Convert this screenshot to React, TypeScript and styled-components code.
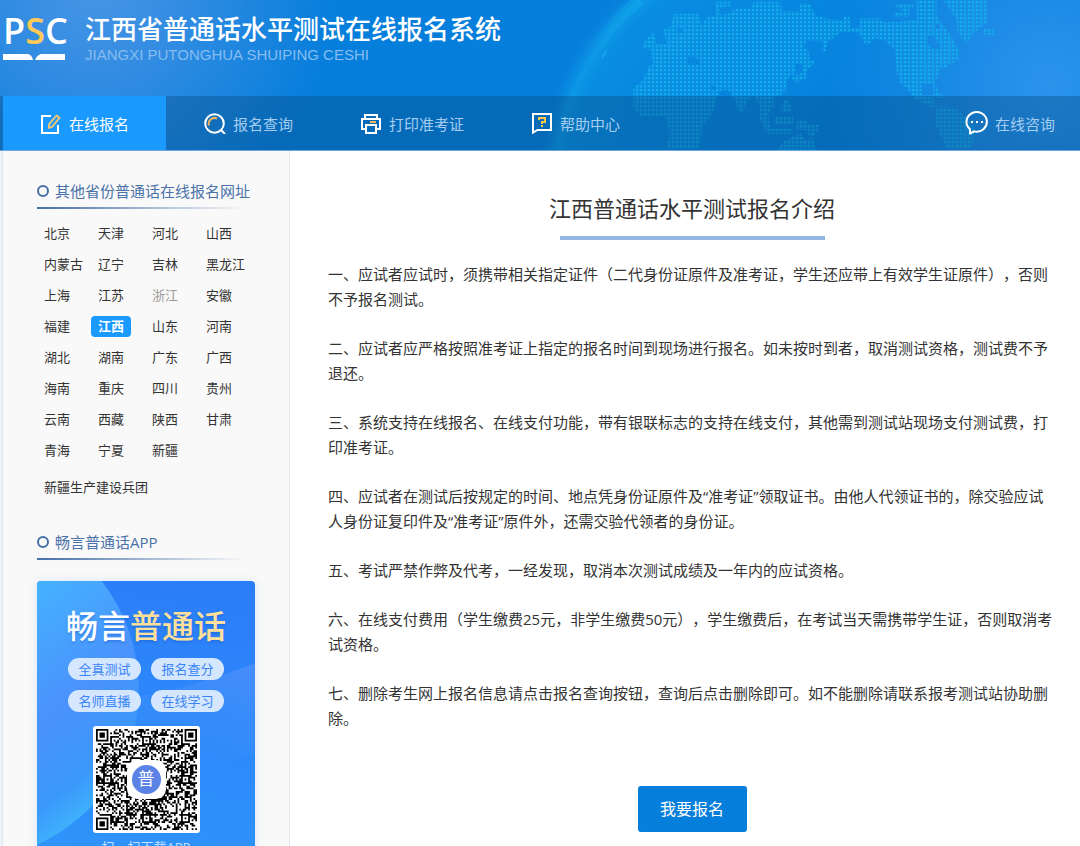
import React from "react";
import styled, { createGlobalStyle } from "styled-components";

const GlobalStyle = createGlobalStyle`
  *, *::before { box-sizing: border-box; }
  body {
    margin: 0;
    background: #eef2f9;
    color: #333;
    font-family: "Open Sans", "Noto Sans CJK SC", sans-serif;
    text-spacing-trim: space-all;
  }
  h1, h2, p, ul { margin: 0; padding: 0; font-weight: 400; }
  a { color: inherit; text-decoration: none; }
`;

const Page = styled.div`
  height: 100vh;
  display: flex;
  flex-direction: column;
  overflow: hidden;
`;

const Header = styled.header`
  position: relative;
  flex: none;
  border-bottom: 1px solid #6ba6da;
  background:
    radial-gradient(circle at 95px -10px, #4595e6 0, #3a8fe3 60px, rgba(6, 126, 219, 0) 240px),
    radial-gradient(circle at right 30px top 85px, #2b94ed 0, rgba(6, 126, 219, 0) 220px),
    #067edb;
`;

const Globe = styled.svg`
  position: absolute;
  top: 0;
  right: 0;
  width: 540px;
  height: 150px;
`;

const Brand = styled.div`
  position: relative;
  display: flex;
  gap: 20px;
  height: 96px;
  padding: 14px 3px;
`;

const Logo = styled.div`
  width: 62px;
  color: #fff;
  font-size: 36px;
  font-weight: 600;
  line-height: 34px;
  white-space: nowrap;
  svg { display: block; margin-top: 6px; }
`;

const LogoAccent = styled.span`
  color: #ffca57;
`;

const BrandTitle = styled.h1`
  color: #fff;
  font-size: 26px;
  font-weight: 500;
  line-height: 30px;
`;

const BrandSub = styled.p`
  color: #86bdf0;
  font-family: "Liberation Sans", sans-serif;
  font-size: 15px;
  line-height: 22px;
`;

const Nav = styled.nav`
  position: relative;
  display: flex;
  height: 54px;
  padding-left: 3px;
  background: rgba(6, 70, 120, 0.35);
`;

const NavLink = styled.a<{ $active?: boolean; $end?: boolean }>`
  display: flex;
  align-items: center;
  justify-content: center;
  gap: 7px;
  width: ${(p) => (p.$active ? "163px" : "auto")};
  margin-right: ${(p) => (p.$active ? "38px" : p.$end ? "25px" : "67px")};
  margin-left: ${(p) => (p.$end ? "auto" : "0")};
  background: ${(p) => (p.$active ? "#1a99ff" : "transparent")};
  color: ${(p) => (p.$active ? "#fff" : "#a5cdf1")};
  font-size: 15px;
  white-space: nowrap;
  svg { flex: none; }
`;

const Body = styled.div`
  flex: 1;
  min-height: 0;
  display: flex;
  padding-left: 2px;
`;

const Sidebar = styled.aside`
  flex: none;
  width: 288px;
  padding: 25px 34px 0;
  border: solid #dfe6ee;
  border-width: 0 1px;
  background: #f9f9f9;
`;

const SideTitle = styled.h2<{ $spaced?: boolean }>`
  display: flex;
  align-items: center;
  gap: 6px;
  margin-top: ${(p) => (p.$spaced ? "24px" : "0")};
  padding-bottom: 3px;
  background: linear-gradient(90deg, #456fa6, rgba(69, 111, 166, 0) 96%) left bottom / 100% 2px no-repeat;
  color: #4a72a8;
  font-size: 15px;
  line-height: 30px;
  white-space: nowrap;
  &::before {
    content: "";
    width: 12px;
    height: 12px;
    border: 2px solid #456fa6;
    border-radius: 50%;
  }
`;

const Provinces = styled.ul`
  display: grid;
  grid-template-columns: repeat(4, 54px);
  margin-top: 9px;
  list-style: none;
`;

const ProvinceItem = styled.li<{ $wide?: boolean }>`
  grid-column: ${(p) => (p.$wide ? "1 / -1" : "auto")};
  margin-top: ${(p) => (p.$wide ? "6px" : "0")};
  display: flex;
  align-items: center;
  height: 31px;
`;

const Province = styled.a<{ $state?: "current" | "closed" }>`
  padding: 0 7px;
  border-radius: 4px;
  background: ${(p) => (p.$state === "current" ? "#1a99ff" : "transparent")};
  color: ${(p) => (p.$state === "current" ? "#fff" : p.$state === "closed" ? "#999" : "#333")};
  font-size: 13px;
  font-weight: ${(p) => (p.$state === "current" ? 700 : 400)};
  line-height: 21px;
  white-space: nowrap;
`;

const AppCard = styled.section`
  position: relative;
  display: flex;
  flex-direction: column;
  align-items: center;
  margin-top: 21px;
  padding: 25px 0 16px;
  border-radius: 4px;
  overflow: hidden;
  background: linear-gradient(190deg, #2b7cf9, #2f96fb);
  box-shadow: 0 0 10px rgba(43, 124, 249, 0.15);
`;

const CardArt = styled.svg`
  position: absolute;
  top: 0;
  left: 0;
  width: 100%;
`;

const CardTitle = styled.p`
  position: relative;
  color: #fff;
  font-size: 32px;
  font-weight: 500;
  line-height: 40px;
  text-shadow: 0 2px 2px rgba(20, 80, 190, 0.35);
`;

const CardTitleAccent = styled.span`
  color: #ffe09a;
`;

const Pills = styled.ul`
  position: relative;
  display: grid;
  grid-template-columns: repeat(2, 73px);
  gap: 10px;
  margin: 12px 0 14px;
  list-style: none;
`;

const Pill = styled.li`
  border-radius: 11px;
  background: #d5e7ff;
  color: #3a85f6;
  font-size: 13px;
  line-height: 22px;
  text-align: center;
`;

const QrFrame = styled.div`
  position: relative;
  width: 107px;
  height: 107px;
  padding: 3px;
  border-radius: 3px;
  background: #fff;
  svg { display: block; width: 100%; height: 100%; }
`;

const QrBadge = styled.span`
  position: absolute;
  inset: 34px;
  border: 5px solid #fff;
  border-radius: 10px;
  background: radial-gradient(circle, #5b83e6 0 14px, #fff 15px);
  color: #fff;
  font-size: 17px;
  line-height: 28px;
  text-align: center;
`;

const CardCaption = styled.p`
  position: relative;
  margin-top: 5px;
  color: #c5e0ff;
  font-size: 13px;
  line-height: 18px;
`;

const Main = styled.main`
  flex: 1;
  display: flex;
  flex-direction: column;
  align-items: center;
  padding: 42px 24px 0 38px;
  background: #fff;
`;

const MainTitle = styled.h2`
  font-size: 22px;
  line-height: 30px;
`;

const TitleBar = styled.div`
  width: 265px;
  height: 4px;
  margin: 13px 0 22px;
  background: #93b6e4;
`;

const Notes = styled.div`
  display: flex;
  flex-direction: column;
  gap: 24px;
  width: 100%;
`;

const Note = styled.p`
  font-size: 15px;
  line-height: 25px;
`;

const ApplyButton = styled.button`
  flex: none;
  width: 109px;
  height: 46px;
  margin-top: 55px;
  padding: 0 0 3px;
  border: 0;
  border-radius: 3px;
  background: #067edb;
  color: #fff;
  font-family: inherit;
  font-size: 16px;
`;

const EditIcon = () => (
  <svg width="22" height="22" viewBox="0 0 22 22" fill="none" strokeWidth="2">
    <path d="M11 4H2v17h16v-8" stroke="#fff" />
    <path d="M16.500 3.500l3 2.200-7.400 9.200-3.400 1 .4-3.700z" stroke="#f5c876" strokeWidth="1.800" strokeLinejoin="round" />
  </svg>
);

const SearchIcon = () => (
  <svg width="22" height="22" viewBox="0 0 22 22" fill="none" strokeWidth="2">
    <circle cx="10.5" cy="11.5" r="9.3" stroke="#fff" />
    <path d="M17 18l4 4" stroke="#fff" />
    <path d="M5 13.5a5.8 5.8 0 0 1 8-7" stroke="#f0b45c" />
  </svg>
);

const PrinterIcon = () => (
  <svg width="22" height="22" viewBox="0 0 22 22" fill="none" stroke="#fff" strokeWidth="2">
    <path d="M5 7V3h12v4M5 17H2V7h18v10h-3" />
    <path d="M6 13h10v8H6z" />
    <path d="M10 10h6" stroke="#f0b45c" />
  </svg>
);

const HelpIcon = () => (
  <svg width="22" height="22" viewBox="0 0 22 22" fill="none" stroke="#fff" strokeWidth="2">
    <path d="M2 2h18v16H6.500L2 20.600z" />
    <path d="M8 8V6h6v4h-3v2M11 13v2" stroke="#ffc64a" />
  </svg>
);

const ChatIcon = () => (
  <svg width="23" height="24" viewBox="0 0 23 24" fill="none">
    <path d="M5 22.500v-4.200A10.200 9.800 0 1 1 9.200 20.400z" stroke="#fff" strokeWidth="2" strokeLinejoin="round" />
    <path d="M6 10h2v2H6zM11 10h2v2h-2zM16 10h2v2h-2z" fill="#fff" />
  </svg>
);

const GlobeArt = () => (
  <Globe viewBox="0 0 540 150" aria-hidden="true">
    <defs>
      <radialGradient id="globe" gradientUnits="userSpaceOnUse" cx="265" cy="190" r="270">
        <stop offset="0" stopColor="#0a8ee4" stopOpacity="0.2" />
        <stop offset="0.7" stopColor="#0b95e6" stopOpacity="0.45" />
        <stop offset="0.88" stopColor="#0b9de8" stopOpacity="0.5" />
        <stop offset="0.93" stopColor="#12aaec" stopOpacity="0.6" />
        <stop offset="1" stopColor="#0c90e4" stopOpacity="0" />
      </radialGradient>
      <radialGradient id="shine" gradientUnits="userSpaceOnUse" cx="98" cy="4" r="75">
        <stop offset="0" stopColor="#16bdf2" stopOpacity="0.7" />
        <stop offset="1" stopColor="#16bdf2" stopOpacity="0" />
      </radialGradient>
      <linearGradient id="fade" x1="0" x2="1">
        <stop offset="0" stopColor="#fff" />
        <stop offset="0.45" stopColor="#fff" />
        <stop offset="0.8" stopColor="#000" />
      </linearGradient>
      <mask id="leftSide">
        <rect width="540" height="150" fill="url(#fade)" />
      </mask>
      <pattern id="dots" width="4" height="4" patternUnits="userSpaceOnUse" patternTransform="scale(3)">
        <rect x="0" y="0" width="4" height="4" fill="#0fa0e8" fillOpacity="0.25" />
        <rect x="0" y="1" width="2" height="2" fill="#16b8f0" fillOpacity="0.7" />
        <path d="M2 1h1v2H2zM0 3h2v1H0z" fill="#16b8f0" fillOpacity="0.25" />
      </pattern>
    </defs>
    <g mask="url(#leftSide)">
      <circle cx="265" cy="190" r="270" fill="url(#globe)" />
      <path d="M100 0Q40 45 18 150" fill="none" stroke="url(#shine)" strokeWidth="12" opacity="0.4" />
      <path d="M61 59q2-6 6-9-1 6-6 9z" fill="#2fb0f0" opacity="0.6" />
    </g>
    <g transform="translate(80 0) scale(0.3333333)" fill="url(#dots)" fillRule="evenodd">
      <path d="M160 42H238L245 78 260 50 330 40 345 25H395L400 5H480L485 33H540V10H570L585 45 615 55 665 62 672 50H688L692 82H720V96L660 98 625 125 615 155H605L608 125 560 122 550 145 565 150 570 180H582L580 195 562 208 558 235 530 247 515 240 520 225 545 220 548 195 525 190 530 215 500 240V265L480 288 460 292 462 320 440 345 420 330 412 300 400 287 378 305 370 335H356L345 300 325 270H305L290 295 275 345 245 380 238 447H140L150 400 135 350H65L40 325V265L70 240 85 200 100 190 90 150 68 140 80 115 102 98 110 132H140L130 90 155 75ZM200 172H228L245 195H205ZM172 88h14v12h-14ZM272 258h14v12h-14Z" />
      <path d="M288 5H335V16L300 25V45H288ZM418 340H445L450 385H515V402H442L420 358ZM463 352H520V375H463ZM490 300H504L518 335H482ZM530 362H560L565 375H595V388L580 408H568L560 390H530ZM515 410 540 400 560 422 575 412 590 452H470L485 430Z" />
      <path d="M718 55H775L790 66H830L890 60V0H950V50L980 88 1000 120 1016 150V180L960 210 946 245 955 280 975 286V294H935L945 285 940 325 885 298 865 270 840 245 830 215 825 150 790 120 765 115 740 138 715 100ZM925 105 940 110 962 140 945 152 920 130ZM945 75h14v12h-14ZM905 252H940V285H905Z" />
      <path d="M830 12H880V28H868V52H822V38H845V25H830ZM970 0H1105L1100 70 1060 100 1045 125H1030L1012 95 1010 60 990 30ZM1092 88H1122V104H1092ZM950 320H1000L1030 345 1065 385 1055 447H980L945 370Z" />
    </g>
  </Globe>
);

const QR_SIZE = 57;
const QR_ALIGN = [6, 28, 50];

// Dark modules of the code: finders, alignment marks, timing lines, then data.
function qrPath(): string {
  let seed = 20231;
  const next = () => {
    seed = (seed * 1103515245 + 12345) % 2147483648;
    return seed / 2147483648;
  };
  const far = QR_SIZE - 7;
  let d = "";
  for (let y = 0; y < QR_SIZE; y++) {
    for (let x = 0; x < QR_SIZE; x++) {
      let dark = next() > 0.5;
      if (x === 6 || y === 6) dark = (x + y) % 2 === 0;
      for (const ay of QR_ALIGN) {
        for (const ax of QR_ALIGN) {
          const r = Math.max(Math.abs(x - ax), Math.abs(y - ay));
          if (r <= 2) dark = r !== 1;
        }
      }
      for (const [fx, fy] of [[0, 0], [far, 0], [0, far]]) {
        const r = Math.max(Math.abs(x - fx - 3), Math.abs(y - fy - 3));
        if (r <= 4) dark = r !== 2 && r !== 4;
      }
      if (dark) d += `M${x} ${y}h1v1h-1z`;
    }
  }
  return d;
}

const provinces = [
  "北京", "天津", "河北", "山西", "内蒙古", "辽宁", "吉林", "黑龙江",
  "上海", "江苏", "浙江", "安徽", "福建", "江西", "山东", "河南",
  "湖北", "湖南", "广东", "广西", "海南", "重庆", "四川", "贵州",
  "云南", "西藏", "陕西", "甘肃", "青海", "宁夏", "新疆", "新疆生产建设兵团",
];

const notes = [
  "一、应试者应试时，须携带相关指定证件（二代身份证原件及准考证，学生还应带上有效学生证原件），否则不予报名测试。",
  "二、应试者应严格按照准考证上指定的报名时间到现场进行报名。如未按时到者，取消测试资格，测试费不予退还。",
  "三、系统支持在线报名、在线支付功能，带有银联标志的支持在线支付，其他需到测试站现场支付测试费，打印准考证。",
  "四、应试者在测试后按规定的时间、地点凭身份证原件及“准考证”领取证书。由他人代领证书的，除交验应试人身份证复印件及“准考证”原件外，还需交验代领者的身份证。",
  "五、考试严禁作弊及代考，一经发现，取消本次测试成绩及一年内的应试资格。",
  "六、在线支付费用（学生缴费25元，非学生缴费50元），学生缴费后，在考试当天需携带学生证，否则取消考试资格。",
  "七、删除考生网上报名信息请点击报名查询按钮，查询后点击删除即可。如不能删除请联系报考测试站协助删除。",
];

const features = ["全真测试", "报名查分", "名师直播", "在线学习"];

export default function App() {
  return (
    <Page>
      <GlobalStyle />
      <Header>
        <GlobeArt />
        <Brand>
          <Logo>
            P<LogoAccent>S</LogoAccent>C
            <svg width="62" height="6" viewBox="0 0 62 6" fill="#fff" aria-hidden="true">
              <path d="M0 0h25q4 1 5 6H0zM62 0H38q-4 1-6 6h30z" />
            </svg>
          </Logo>
          <div>
            <BrandTitle>江西省普通话水平测试在线报名系统</BrandTitle>
            <BrandSub>JIANGXI PUTONGHUA SHUIPING CESHI</BrandSub>
          </div>
        </Brand>
        <Nav>
          <NavLink href="#apply" $active><EditIcon />在线报名</NavLink>
          <NavLink href="#query"><SearchIcon />报名查询</NavLink>
          <NavLink href="#print"><PrinterIcon />打印准考证</NavLink>
          <NavLink href="#help"><HelpIcon />帮助中心</NavLink>
          <NavLink href="#chat" $end><ChatIcon />在线咨询</NavLink>
        </Nav>
      </Header>
      <Body>
        <Sidebar>
          <SideTitle>其他省份普通话在线报名网址</SideTitle>
          <Provinces>
            {provinces.map((name) => (
              <ProvinceItem key={name} $wide={name.length > 4}>
                <Province
                  href="#province"
                  $state={name === "江西" ? "current" : name === "浙江" ? "closed" : undefined}
                >
                  {name}
                </Province>
              </ProvinceItem>
            ))}
          </Provinces>
          <SideTitle $spaced>畅言普通话APP</SideTitle>
          <AppCard>
            <CardArt viewBox="0 0 218 290" aria-hidden="true">
              <defs>
                <linearGradient id="disc" x1="0" y1="0" x2="0.3" y2="1">
                  <stop offset="0" stopColor="#45b2ff" />
                  <stop offset="0.5" stopColor="#4a92fc" />
                  <stop offset="0.8" stopColor="#3b98fb" />
                  <stop offset="1" stopColor="#40bcfb" />
                </linearGradient>
                <linearGradient id="wave" x1="1" y1="0" x2="0.7" y2="1">
                  <stop offset="0" stopColor="#4f90fb" stopOpacity="0.8" />
                  <stop offset="1" stopColor="#3a94fb" stopOpacity="0" />
                </linearGradient>
              </defs>
              <path d="M100 116Q165 104 218 82V172Q150 196 90 204z" fill="url(#wave)" />
              <path d="M0 0H65Q102 50 102 110 102 170 55 225 30 250 0 264z" fill="url(#disc)" />
            </CardArt>
            <CardTitle>畅言<CardTitleAccent>普通话</CardTitleAccent></CardTitle>
            <Pills>
              {features.map((name) => <Pill key={name}>{name}</Pill>)}
            </Pills>
            <QrFrame>
              <svg viewBox="0 0 57 57" role="img" aria-label="APP">
                <path d={qrPath()} fill="#000" />
              </svg>
              <QrBadge>普</QrBadge>
            </QrFrame>
            <CardCaption>扫一扫下载APP</CardCaption>
          </AppCard>
        </Sidebar>
        <Main>
          <MainTitle>江西普通话水平测试报名介绍</MainTitle>
          <TitleBar />
          <Notes>
            {notes.map((text) => <Note key={text}>{text}</Note>)}
          </Notes>
          <ApplyButton type="button">我要报名</ApplyButton>
        </Main>
      </Body>
    </Page>
  );
}
